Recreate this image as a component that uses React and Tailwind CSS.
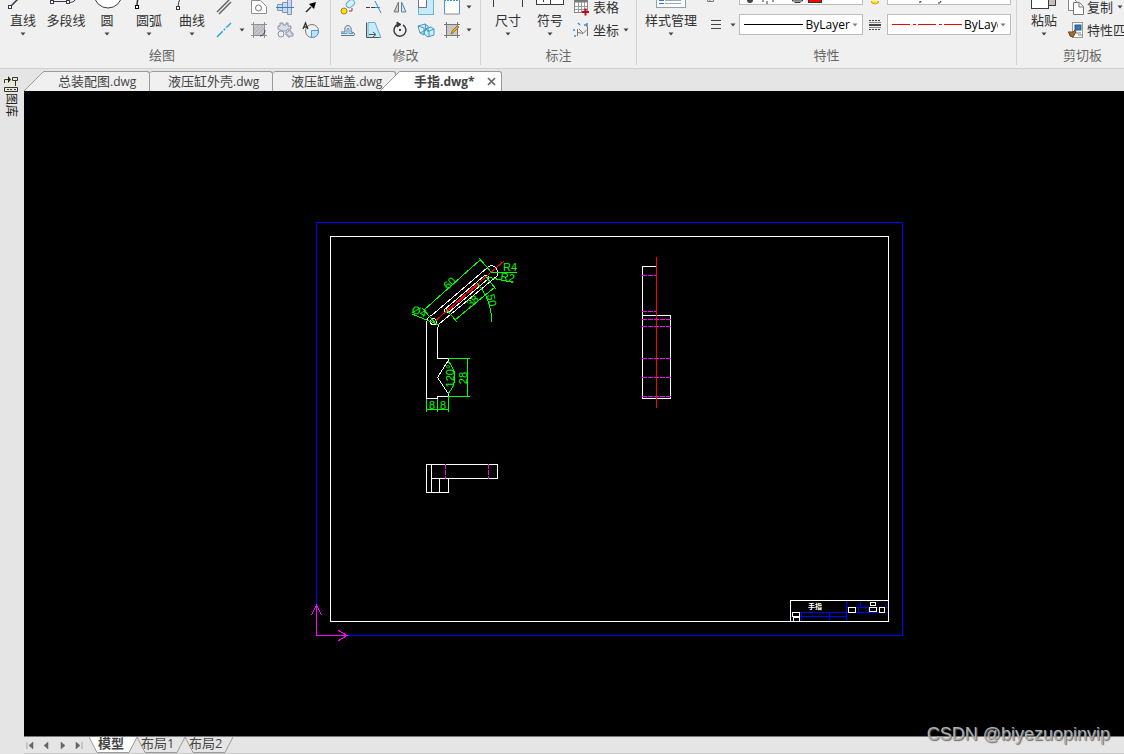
import React from "react";

const INK = "#3b3b44";

function Caret({ light = false }) {
  return (
    <svg width="6" height="4" viewBox="0 0 6 4" className="shrink-0" aria-hidden="true">
      <path d="M.5.5h5L3 3.5z" fill={light ? "#808080" : "#444"} />
    </svg>
  );
}

function Icon({ children }) {
  return (
    <svg width="18" height="18" viewBox="0 0 18 18" fill="none" stroke={INK} strokeWidth="1" className="shrink-0 overflow-visible" aria-hidden="true">
      {children}
    </svg>
  );
}

const big = {
  line: (
    <>
      <path d="M8 6L22-8" strokeWidth="1.5" />
      <rect x="5.500" y="5.500" width="3" height="3" fill="#fff" />
    </>
  ),
  polyline: (
    <>
      <path d="M6 1.500h16M22 2.500q6 0 7-2.500" />
      <rect x="4.500" y=".5" width="3" height="3" fill="#fff" />
      <rect x="20.500" y=".5" width="3" height="3" fill="#fff" />
    </>
  ),
  circle: <circle cx="21" cy="-6" r="14" fill="#fff" />,
  arc: (
    <>
      <path d="M8 6Q8-2 12-8" strokeWidth="1.500" />
      <rect x="6.500" y="5.500" width="3" height="3" fill="#fff" stroke="#000" />
    </>
  ),
  curve: (
    <>
      <path d="M6 7q0-5 3-10" />
      <rect x="4.500" y="6.500" width="3" height="3" fill="#fff" />
    </>
  ),
  dim: <path d="M5.500 7V-4M34.500 7V-4" />,
  symbol: (
    <>
      <rect x="6.500" y="-6.500" width="27" height="11" fill="#fff" />
      <path d="M20.500-6V4.500M13.500-2v4" />
    </>
  ),
  style: (
    <>
      <rect x="5.500" y="-8.500" width="29" height="16" fill="#fff" stroke="#8ba0b8" />
      <path d="M8 .5h5M8 3.500h5" stroke="#3978bd" />
      <path d="M14 .5h16M14 3.500h16" stroke="#9aa9bb" />
    </>
  ),
  paste: (
    <>
      <rect x="24.500" y="-6.500" width="7" height="12" fill="#c8beb2" stroke={INK} />
      <rect x="7.500" y="-8.500" width="17" height="17" fill="#fff" />
    </>
  ),
};

function BigButton({ label, icon, width, caret = true }) {
  return (
    <button type="button" className={"flex flex-col items-center whitespace-nowrap text-[13px] text-[#333333] " + width}>
      <svg width="40" height="12" viewBox="0 0 40 12" fill="none" stroke={INK} className="shrink-0" aria-hidden="true">
        {big[icon]}
      </svg>
      <span className="block h-4 leading-4">{label}</span>
      <span className="flex h-3 items-center">{caret && <Caret />}</span>
    </button>
  );
}

function IconButton({ label, children, width = "w-[26px]" }) {
  return (
    <button type="button" aria-label={label} className={"flex h-[14px] shrink-0 items-center justify-center " + width}>
      {children}
    </button>
  );
}

function CaretButton({ label }) {
  return (
    <button type="button" aria-label={label} className="flex h-[14px] w-2 shrink-0 items-center justify-center">
      <Caret />
    </button>
  );
}

function Rows({ children, className = "" }) {
  return <div className={"flex shrink-0 flex-col gap-[9px] " + className}>{children}</div>;
}

function Row({ children }) {
  return <div className="flex h-[14px] items-center">{children}</div>;
}

function Group({ title, width, children }) {
  return (
    <section aria-label={title} className={"flex h-[65px] shrink-0 flex-col border-r border-[#d2d2d2] " + width}>
      <div className="flex h-[47px] items-start">{children}</div>
      <h2 className="text-center text-[13px] leading-4 text-[#666666]">{title}</h2>
    </section>
  );
}

function TextButton({ label, children, caret = true }) {
  return (
    <button type="button" className="flex h-[14px] items-center gap-[2px] whitespace-nowrap text-[13px] leading-[14px] text-[#333333]">
      {children}
      <span>{label}</span>
      {caret && (
        <span className="pl-[2px]">
          <Caret />
        </span>
      )}
    </button>
  );
}

function Combo({ label, children, value, clip = false }) {
  return (
    <label className="flex h-[21px] w-[124px] items-center justify-between border border-[#bcbcbc] bg-white px-1">
      {children}
      <select
        aria-label={label}
        className={"appearance-none overflow-hidden bg-transparent text-[12px] leading-4 text-black outline-none " + (clip ? "w-[34px]" : "w-[44px]")}
      >
        <option>{value}</option>
      </select>
      <Caret light />
    </label>
  );
}

function Ribbon() {
  return (
    <header className="flex h-[69px] shrink-0 overflow-hidden border-b border-[#d0d0d0] bg-[#f0f0f0]">
      <Group title="绘图" width="w-[331px] pr-[6px]">
        <div className="flex pl-[2px]">
          <BigButton label="直线" icon="line" width="w-[42px]" />
          <BigButton label="多段线" icon="polyline" width="w-[44px]" caret={false} />
          <BigButton label="圆" icon="circle" width="w-[38px]" />
          <BigButton label="圆弧" icon="arc" width="w-[46px]" />
          <BigButton label="曲线" icon="curve" width="w-[40px]" />
        </div>
        <Rows>
          <Row>
            <IconButton label="平行线">
              <Icon>
                <path d="M1 14L13 2M3 16L15 4" strokeWidth="1.500" stroke="#666" />
              </Icon>
            </IconButton>
            <span className="w-2" />
            <IconButton label="轮廓线">
              <Icon>
                <path d="M1.500 2.500h9l6 6v7h-15z" fill="#fff" stroke="#8d8d95" />
                <circle cx="8.500" cy="10" r="3" stroke="#777" />
              </Icon>
            </IconButton>
            <IconButton label="孔轴">
              <Icon>
                <path d="M1.500 6.500h5v6h-5zM6.500 4.500h5v10h-5zM11.500 1.500h4v15h-4z" fill="#c9daf0" stroke="#8094b4" />
                <path d="M0 9.500h18" stroke="#2f84d0" />
              </Icon>
            </IconButton>
            <IconButton label="箭头">
              <Icon>
                <path d="M4 14l5-5" strokeWidth="1.500" stroke="#222" />
                <path d="M14 4l-2 7-5-5z" fill="#000" stroke="none" />
              </Icon>
            </IconButton>
          </Row>
          <Row>
            <IconButton label="中心线">
              <Icon>
                <path d="M1 16L15 2" stroke="#24a4d8" strokeWidth="1.400" strokeDasharray="8 1.500 2 1.500" />
              </Icon>
            </IconButton>
            <CaretButton label="中心线选项" />
            <IconButton label="剖面线">
              <Icon>
                <rect x="3.500" y="3.500" width="11" height="11" fill="#c2c5c9" stroke="#8c9095" />
                <path d="M1 3.500h16M3.500 1v16M14.500 1v16M1 14.500h16" stroke="#8c9095" />
                <path d="M4 9l5-5M4 13l9-9M7 14l7-7" stroke="#abb0b5" />
                <path d="M15 9q0 5-5 6" stroke="#444" />
              </Icon>
            </IconButton>
            <IconButton label="零件">
              <Icon>
                <path d="M4 2h3v2h3V2h2v3h3v3h-3l-2 2H6L2 8V5h2zM10 11h2l1-2 2 1v2h2v3h-3v1h-2v-2h-2z" fill="#d6dde8" stroke="#8b93a1" />
                <circle cx="5" cy="13" r="3" fill="#f0f0f0" stroke="#8b93a1" />
              </Icon>
            </IconButton>
            <IconButton label="局部放大">
              <Icon>
                <circle cx="10" cy="10" r="6.500" stroke="#777" />
                <path d="M9.500 9.500h7q0 7-7 7z" fill="#b9e4fb" stroke="#4d9ed0" />
                <path d="M1 8l2.500-6L6 8M2 6h3" stroke="#333" strokeWidth="1.300" />
              </Icon>
            </IconButton>
          </Row>
        </Rows>
      </Group>

      <Group title="修改" width="w-[150px]">
        <Rows className="pl-1">
          <Row>
            <IconButton label="复制对象">
              <Icon>
                <rect x="7" y="3" width="9" height="6" rx="3" fill="#d8effc" stroke="#58a9dc" transform="rotate(-40 11 6)" />
                <circle cx="5" cy="13" r="3" fill="#ffe100" stroke="#a18520" />
                <path d="M10 13h3v-3" stroke="#a33" />
              </Icon>
            </IconButton>
            <IconButton label="裁剪">
              <Icon>
                <path d="M1 9.500h9" strokeDasharray="4 1" />
                <path d="M10 3l6 12M10 9.500h5" stroke="#2c8fd0" />
              </Icon>
            </IconButton>
            <IconButton label="镜像">
              <Icon>
                <path d="M7.500 4v10H3z" fill="#c5cbd2" stroke="#777" />
                <path d="M10.500 4v10H15z" fill="#cfe5f4" stroke="#5686a8" />
              </Icon>
            </IconButton>
            <IconButton label="缩放">
              <Icon>
                <rect x="1.500" y="1.500" width="15" height="15" fill="#c8ebfc" stroke="#68b4dd" />
                <rect x="1.500" y="1.500" width="8" height="8" fill="#fff" stroke="#777" />
              </Icon>
            </IconButton>
            <IconButton label="拉伸">
              <Icon>
                <path d="M1.500 1v15h15V1" fill="#fff" stroke="#888" />
                <path d="M1 2.500h16M16.500 2v14M1.500 2v14" stroke="#3b9bd1" strokeDasharray="2 1" />
              </Icon>
            </IconButton>
            <CaretButton label="拉伸选项" />
          </Row>
          <Row>
            <IconButton label="等距线">
              <Icon>
                <path d="M2 14.500h13q2-3-3-3.500 1-6-3-6.500-4 0-3 6.500H2" fill="#e2ecf4" stroke="#6a7480" />
                <path d="M2 12.500h6V8q1-2 2 0v4.500h4" stroke="#48a0d4" />
              </Icon>
            </IconButton>
            <IconButton label="斜切">
              <Icon>
                <path d="M3 1.500h7l6 15H3z" fill="#c5eafb" stroke="#6aafd2" />
                <path d="M1.500 1.500v15h13M4 13.500h6M8 11l3 2.500L8 16" stroke="#555" />
              </Icon>
            </IconButton>
            <IconButton label="旋转">
              <Icon>
                <path d="M12 4A6 6 0 1 1 7 3.500" strokeWidth="1.500" />
                <path d="M6 1l4 2.500L6 6z" fill={INK} />
                <path d="M8 9h2" strokeWidth="2" />
              </Icon>
            </IconButton>
            <IconButton label="三维">
              <Icon>
                <path d="M1 5l7-2 1 6-6 3zM8 3l3 2v6M3 12l4 2V7L1 5M8 8l6-2 3 2v6l-6 2-4-3z M8 8l4 2v6M12 10l5-2" fill="#c8edfb" stroke="#4599c4" />
              </Icon>
            </IconButton>
            <IconButton label="编辑剖面">
              <Icon>
                <rect x="3.500" y="3.500" width="11" height="11" fill="#c7c7c7" stroke="#777" />
                <path d="M1 3.500h16M3.500 1v16M14.500 1v16M1 14.500h16" stroke="#777" />
                <path d="M16 6l-6 6-2 1 1-3 5-5z" fill="#f3a52d" stroke="#a1782e" />
              </Icon>
            </IconButton>
            <CaretButton label="编辑选项" />
          </Row>
        </Rows>
      </Group>

      <Group title="标注" width="w-[156px]">
        <div className="flex pl-[6px]">
          <BigButton label="尺寸" icon="dim" width="w-[42px]" />
          <BigButton label="符号" icon="symbol" width="w-[42px]" />
        </div>
        <Rows className="pl-[2px]">
          <TextButton label="表格" caret={false}>
            <Icon>
              <rect x="1.500" y="1.500" width="13" height="13" fill="#fff" stroke="#888" />
              <path d="M2 3h12" stroke="#777" strokeWidth="3" />
              <path d="M2 8.500h12M2 11.500h12M5.500 4v10M8.500 4v10M11.500 4v10" stroke="#999" />
              <path d="M9 14h7M12.500 10.500v7" stroke="#b80d1a" strokeWidth="2" />
            </Icon>
          </TextButton>
          <TextButton label="坐标">
            <Icon>
              <path d="M4.500 8v7M5 11.500l5 1 4-4M6 8l4 4M14.500 6v9" stroke="#777" />
              <path d="M1 8v2M5 2l2 2M11 4h3M14 2v4M1 15h2" stroke="#368fd0" strokeWidth="1.500" />
            </Icon>
          </TextButton>
        </Rows>
      </Group>

      <Group title="特性" width="w-[380px]">
        <div className="flex pl-[6px]">
          <BigButton label="样式管理" icon="style" width="w-[56px]" />
        </div>
        <div className="flex flex-col gap-[9px]">
          <div className="flex h-[5px] items-end">
            <div className="flex w-[40px] pl-2">
              <svg width="8" height="5" fill="none" stroke="#777" aria-hidden="true">
                <path d="M.5 0v1.500h6V0M3 0v1" />
              </svg>
            </div>
            <button type="button" aria-label="图层" className="h-[21px] w-[124px] shrink-0 border border-[#bcbcbc] bg-white">
              <svg width="122" height="19" aria-hidden="true">
                <circle cx="10" cy="15" r="3" fill="#444" />
                <path d="M22 16h2M27 16v3M32 16h2" stroke="#333" />
                <path d="M52.500 13v3h10v-3M54.500 17.500h6" stroke="#333" fill="#ddd" />
                <rect x="68.500" y="8.500" width="13" height="9" fill="red" stroke="#333" />
              </svg>
            </button>
            <div className="flex w-6 justify-center">
              <svg width="10" height="4" aria-hidden="true">
                <circle cx="5" cy="-1" r="4" fill="#ffe313" stroke="#caa713" />
              </svg>
            </div>
            <button type="button" aria-label="颜色" className="h-[21px] w-[124px] shrink-0 border border-[#bcbcbc] bg-white text-left">
              <svg width="60" height="19" fill="none" stroke="#222" aria-hidden="true">
                <path d="M33 16q0 2-2 1M53 16q-1 3-3 2" />
              </svg>
            </button>
          </div>
          <div className="flex items-center">
            <div className="flex w-[40px] items-center justify-between pl-[12px] pr-[2px]">
              <svg width="10" height="9" viewBox="0 0 10 9" stroke="#444" aria-hidden="true">
                <path d="M0 .5h10M0 4.500h10M0 8.500h10" />
              </svg>
              <CaretButton label="线宽选项" />
            </div>
            <Combo label="线宽" value="ByLayer">
              <svg width="59" height="2" aria-hidden="true">
                <path d="M0 .5h59" stroke="#000" />
              </svg>
            </Combo>
            <div className="flex w-6 justify-center">
              <svg width="12" height="10" viewBox="0 0 12 10" stroke="#444" aria-hidden="true">
                <path d="M0 .5h12M0 9.500h12" strokeDasharray="2 1" />
                <path d="M0 2.500h12M0 7.500h12" stroke="#888" />
                <path d="M0 5h12" strokeWidth="2" />
              </svg>
            </div>
            <Combo label="线型" value="ByLayer" clip>
              <svg width="70" height="2" aria-hidden="true">
                <path d="M0 .5h70" stroke="red" strokeDasharray="18 3 3 2" />
              </svg>
            </Combo>
          </div>
        </div>
      </Group>

      <Group title="剪切板" width="w-[132px]">
        <div className="flex pl-[6px]">
          <BigButton label="粘贴" icon="paste" width="w-[42px]" />
        </div>
        <Rows className="pl-[2px]">
          <TextButton label="复制">
            <Icon>
              <path d="M1.500 1.500h6l2 2v9h-8z" fill="#fff" stroke="#888" />
              <path d="M6.500 4.500h6l4 4v8h-10z" fill="#fff" stroke="#777" />
              <path d="M12 5v4h4" stroke="#777" />
            </Icon>
          </TextButton>
          <TextButton label="特性匹配" caret={false}>
            <Icon>
              <rect x="5.500" y="1.500" width="10" height="15" fill="#fff" stroke="#999" />
              <rect x="8" y="4" width="6" height="5" fill="#347bb8" stroke="#235a88" />
              <path d="M9 12h5M11 14h4" stroke="#777" />
              <path d="M1 11h5l2-2 1 2-3 5q-4 0-4-4z" fill="#a66a32" stroke="#704622" />
            </Icon>
          </TextButton>
        </Rows>
      </Group>
    </header>
  );
}

function SlantEdge({ fill }) {
  return (
    <svg width="20" height="20" viewBox="0 0 20 20" className="shrink-0" aria-hidden="true">
      <path d="M0 20L18 2Q19 .5 20 .5V20z" fill={fill} />
      <path d="M0 20L18 2Q19 .5 20 .5" fill="none" stroke="#999" />
    </svg>
  );
}

function FileName({ name, ext }) {
  return (
    <>
      {name}
      <span className="text-[12px]">{ext}</span>
    </>
  );
}

function FileTabs() {
  const tab = "flex h-5 items-start whitespace-nowrap rounded-tr-[3px] border-r border-t border-[#999999] text-[13px] leading-[18px] text-[#444444] ";
  return (
    <nav aria-label="文件" className="flex h-[22px] shrink-0 items-end bg-[#e5e5e5]">
      <SlantEdge fill="#f0f0f0" />
      <button type="button" className={tab + "w-[106px] bg-[#f0f0f0] pl-[14px]"}>
        <span><FileName name="总装配图" ext=".dwg" /></span>
      </button>
      <button type="button" className={tab + "w-[123px] rounded-tl-[3px] bg-[#f0f0f0] pl-[18px]"}>
        <span><FileName name="液压缸外壳" ext=".dwg" /></span>
      </button>
      <button type="button" className={tab + "w-[123px] rounded-tl-[3px] bg-[#f0f0f0] pl-[18px]"}>
        <span><FileName name="液压缸端盖" ext=".dwg" /></span>
      </button>
      <div className="-ml-4 flex">
        <SlantEdge fill="#ffffff" />
        <div className={tab + "w-[102px] justify-between bg-white pl-[14px] pr-[5px]"}>
          <button type="button" className="font-bold">
            <FileName name="手指" ext=".dwg*" />
          </button>
          <button type="button" aria-label="关闭" className="flex h-[19px] w-[9px] items-center justify-center">
            <svg width="9" height="9" viewBox="0 0 9 9" stroke="#666" strokeWidth="1.700" aria-hidden="true">
              <path d="M1 1l7 7M8 1L1 8" />
            </svg>
          </button>
        </div>
      </div>
    </nav>
  );
}

function Drawing() {
  return (
    <div className="min-h-0 flex-1 overflow-hidden bg-black">
      <svg viewBox="24 91 1100 645" className="block size-full" fill="none" strokeWidth="1" shapeRendering="crispEdges" role="img" aria-label="手指">
        <rect x="316.500" y="222.500" width="586" height="413" stroke="#0000ff" />
        <rect x="330.500" y="236.500" width="558" height="385" stroke="#fff" />

        <g stroke="#fff">
          <path d="M431 316L487 268Q491 264 495 267Q499 271 497 276L439 324L437.500 328.500V358.500H448.500V360L437.500 377.500L448.500 394V396.500H437.500V398.500H426.500V322L428 318L431 315" />
          <path d="M444 310L484 276Q487 274 488 276Q489 277 488 279L448 313Q445 313 444.500 310" />
          <circle cx="433.500" cy="321.500" r="3" />
        </g>
        <path d="M504 261L433 323" stroke="#f00" />
        <path d="M478 284L446 312" stroke="#f00" strokeWidth="2" strokeDasharray="12 4" />
        <g stroke="#0f0">
          <path d="M422 308L437 325M424 310L480 260M479 258L492 273M492 272.500H517M487 277L513 282.500M412 314L439 325" />
          <path d="M446 309L457 322M455 320L495 287M486 277L496 289M477 283Q492 300 491.500 322" />
          <path d="M448 358.500H470M448 396.500H470M467.500 358V397M448 361Q462 377 448 394" />
          <path d="M426.500 399V412M437.500 399V412M448.500 397V412M426 409.500H449" />
        </g>
        <g fill="#0f0" className="font-['Liberation_Sans',sans-serif] text-[11px]" textAnchor="middle">
          <text transform="translate(452 286) rotate(-41)">60</text>
          <text transform="translate(475 304) rotate(-41)">38</text>
          <text transform="translate(488 301) rotate(78)">50</text>
          <text transform="translate(510 271)">R4</text>
          <text transform="translate(507 281) rotate(10)">R2</text>
          <text transform="translate(418 315) rotate(20)">Ø4</text>
          <text transform="translate(454 376) rotate(-90)">120°</text>
          <text transform="translate(467 378) rotate(-90)">28</text>
          <text x="432" y="409">8</text>
          <text x="443" y="409">8</text>
        </g>

        <path d="M656 266.500H642.500V398.500H670.500V315.500H642.500" stroke="#fff" />
        <path d="M642 275.500H656M642 311.500H656M642 319.500H671M642 326.500H671M642 358.500H671M642 377.500H671M642 396.500H671" stroke="#f0f" strokeDasharray="5 1" />
        <path d="M656.500 257V408" stroke="#f00" />

        <path d="M431.500 464V492M426.500 464.500H497.500V478.500H431.500M426.500 464V492.500H448.500V478.500M439.500 478V492" stroke="#fff" />
        <path d="M445.500 464V479M488.500 464V479" stroke="#f0f" strokeDasharray="5 1" />

        <path d="M801 612.500H888M790 616.500H846M846.500 601V621M860.500 601V607M846 607.500H888M801.500 612V621M829.500 612V621M858.500 607V612M868.500 607V612" stroke="#00f" />
        <path d="M888 600.500H790.500V621" stroke="#fff" />
        <g stroke="#fff" fill="#000">
          <rect x="848.500" y="607.500" width="7" height="5" />
          <rect x="869.500" y="607.500" width="7" height="4" />
          <rect x="879.500" y="607.500" width="5" height="5" />
          <rect x="870.500" y="602.500" width="5" height="3" />
          <rect x="792.500" y="612.500" width="7" height="4" />
          <rect x="793.500" y="617.500" width="6" height="4" />
        </g>
        <text x="808" y="609" fill="#fff" className="text-[7px] font-bold">手指</text>

        <path d="M316.500 605V635.500H347M311.500 615L316.500 605L321.500 615M338 630L347 635.500L338 641" stroke="#f0f" />
      </svg>
    </div>
  );
}

function SheetTab({ label, active = false }) {
  return (
    <button
      type="button"
      className={"relative flex h-4 w-12 items-start whitespace-nowrap text-[13px] leading-3 text-[#444444] " + (active ? "z-10 pl-[9px] font-bold" : "pl-1")}
    >
      <svg width="48" height="16" className="absolute inset-0" aria-hidden="true">
        <path d="M0 0L8 15.500H40L48 0" fill={active ? "#fff" : "#e5e5e5"} stroke="#999" />
      </svg>
      <span className="relative">{label}</span>
    </button>
  );
}

function SheetBar() {
  const nav = [
    ["首页", "M1 0v7M7 0v7L3 3.500z"],
    ["上一页", "M6 0v7L2 3.500z"],
    ["下一页", "M2 0v7L6 3.500z"],
    ["末页", "M7 0v7M1 0v7L5 3.500z"],
  ];
  return (
    <footer className="flex h-[18px] shrink-0 items-start border-b border-t border-b-[#c8c8c8] border-t-[#777777] bg-[#e5e5e5]">
      <div className="flex w-[65px] shrink-0 items-center justify-between pl-[2px] pr-[6px] pt-[5px]">
        {nav.map(([name, d]) => (
          <button key={name} type="button" aria-label={name}>
            <svg width="8" height="7" fill="#666" stroke="#666" strokeWidth=".5" className="block" aria-hidden="true">
              <path d={d} />
            </svg>
          </button>
        ))}
      </div>
      <SheetTab label="模型" active />
      <SheetTab label="布局1" />
      <SheetTab label="布局2" />
    </footer>
  );
}

export default function App() {
  return (
    <div className="relative flex h-screen flex-col overflow-hidden bg-[#e5e5e5] font-['Open_Sans','Noto_Sans_CJK_SC',sans-serif]">
      <Ribbon />
      <div className="flex min-h-0 flex-1">
        <aside className="flex w-6 shrink-0 flex-col items-start pl-1 pt-[7px]">
          <button type="button" className="flex flex-col items-center text-[12px] leading-[14px] text-[#222222]">
            <svg width="14" height="17" viewBox="0 0 14 17" fill="none" stroke="#333" aria-hidden="true">
              <path d="M0 0h14v17H0z" fill="#eaead8" stroke="none" />
              <path d="M.5 7V3.500h4M8.500 1.500h5v3h-5zM11.500 5v5" />
              <path d="M4 0l3 3.500L4 7z" fill="#222" stroke="none" />
              <path d="M.5 11.500h13v4H.5zM3 13.500h2M6 13.500h2M10 13.500h2" />
            </svg>
            <span className="[text-orientation:sideways] [writing-mode:vertical-rl]">图库</span>
          </button>
        </aside>
        <main className="flex min-w-0 flex-1 flex-col">
          <FileTabs />
          <Drawing />
          <SheetBar />
        </main>
      </div>
      <p className="pointer-events-none absolute bottom-2 right-[14px] font-['Liberation_Sans',sans-serif] text-[18px] leading-6 text-[#b0b0b0] [text-shadow:1px_1px_1px_#666]">
        CSDN @biyezuopinvip
      </p>
    </div>
  );
}
